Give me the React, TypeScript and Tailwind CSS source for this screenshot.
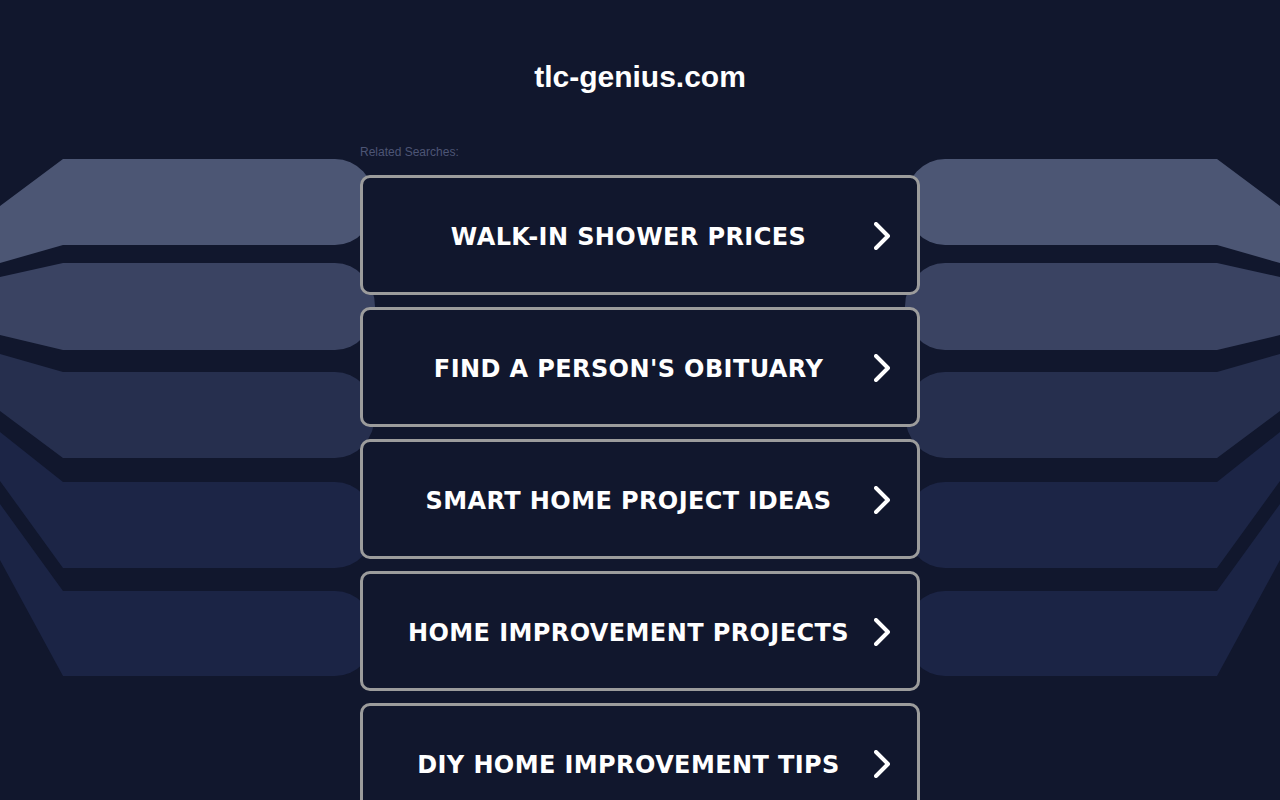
import React from "react";

const items = [
  "WALK-IN SHOWER PRICES",
  "FIND A PERSON'S OBITUARY",
  "SMART HOME PROJECT IDEAS",
  "HOME IMPROVEMENT PROJECTS",
  "DIY HOME IMPROVEMENT TIPS",
];

type Band = { t63: number; b63: number; t0: number; b0: number; color: string };

const bands: Band[] = [
  { t63: 159, b63: 245, t0: 206, b0: 263, color: "#4c5674" },
  { t63: 263, b63: 350, t0: 277, b0: 335, color: "#3a4362" },
  { t63: 372, b63: 458, t0: 354, b0: 411, color: "#262f4e" },
  { t63: 482, b63: 568, t0: 432, b0: 481, color: "#1c2546" },
  { t63: 591, b63: 676, t0: 504, b0: 560, color: "#1b2445" },
];

function bandPath(b: Band) {
  const mid = (b.t63 + b.b63) / 2;
  const ry = (b.b63 - b.t63) / 2;
  return `M0,${b.t0} L63,${b.t63} L335,${b.t63} A40,${ry} 0 0 1 375,${mid} A40,${ry} 0 0 1 335,${b.b63} L63,${b.b63} L0,${b.b0} Z`;
}

function Background() {
  return (
    <svg
      className="absolute inset-0 pointer-events-none"
      width="1280"
      height="800"
      viewBox="0 0 1280 800"
    >
      <g>
        {bands.map((b, i) => (
          <path key={i} d={bandPath(b)} fill={b.color} />
        ))}
      </g>
      <g transform="translate(1280,0) scale(-1,1)">
        {bands.map((b, i) => (
          <path key={i} d={bandPath(b)} fill={b.color} />
        ))}
      </g>
    </svg>
  );
}

function Chevron() {
  return (
    <svg width="16" height="28" viewBox="0 0 16 28" className="shrink-0 mr-[27px] mt-[2px]">
      <polyline
        points="2,2 14,14 2,26"
        fill="none"
        stroke="#ffffff"
        strokeWidth="4"
        strokeLinecap="round"
        strokeLinejoin="round"
      />
    </svg>
  );
}

export default function App() {
  return (
    <div className="relative min-h-screen w-full overflow-hidden bg-[#11172d]">
      <Background />
      <div className="relative flex flex-col items-center">
        <h1 className="pt-[59px] text-[30px] leading-[36px] font-bold text-white font-['Liberation_Sans',Arial,sans-serif]">
          tlc-genius.com
        </h1>
        <div className="w-[560px] mt-[50px]">
          <div className="text-[12px] leading-[14px] text-[#4d5575] font-['Liberation_Sans',Arial,sans-serif]">
            Related Searches:
          </div>
          <div className="mt-[16px] flex flex-col gap-[12px]">
            {items.map((t) => (
              <a
                key={t}
                className="flex items-center h-[120px] rounded-[10px] border-[3px] border-[#9c9c9c] bg-[#11172d] pl-[20px]"
              >
                <span className="flex-1 mt-[4px] text-center text-white font-bold text-[24px] leading-[30px] tracking-[0.4px] font-['DejaVu_Sans',Verdana,sans-serif]">
                  {t}
                </span>
                <Chevron />
              </a>
            ))}
          </div>
        </div>
      </div>
    </div>
  );
}
